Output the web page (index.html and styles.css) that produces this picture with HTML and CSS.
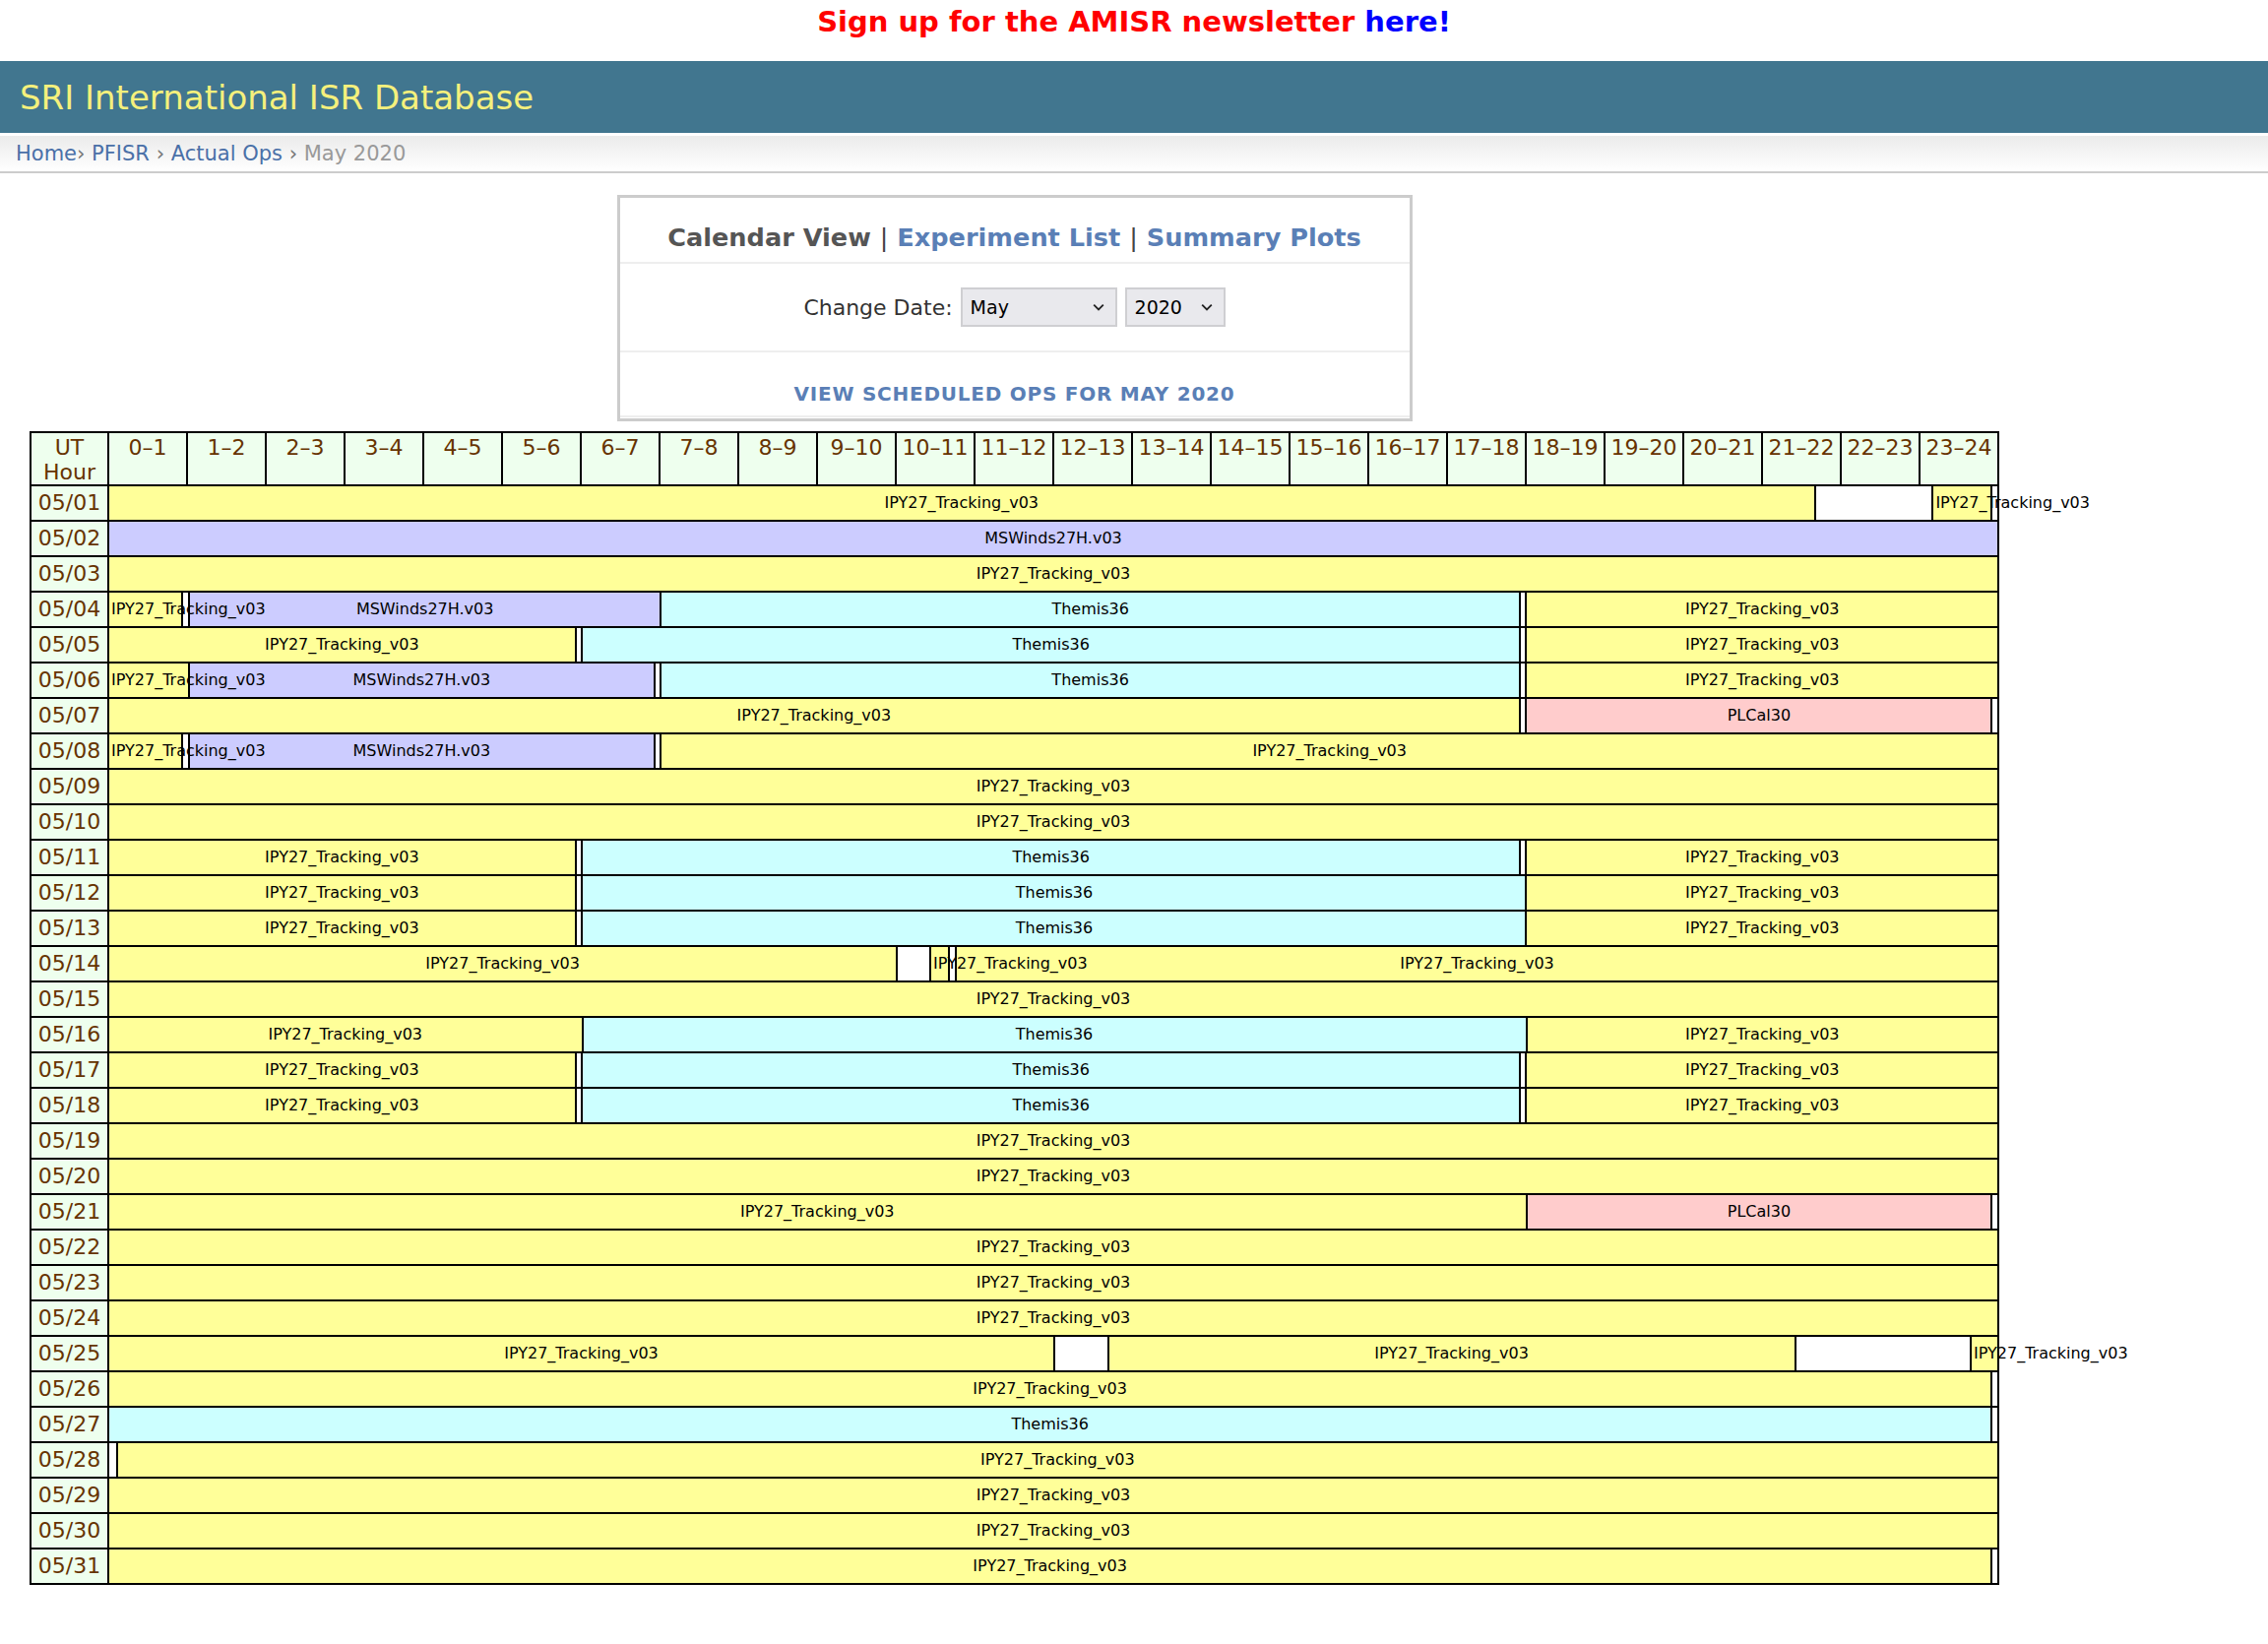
FILE: index.html
```html
<!DOCTYPE html>
<html lang="en">
<head>
<meta charset="utf-8">
<title>SRI International ISR Database - PFISR Actual Ops May 2020</title>
<link rel="stylesheet" href="styles.css">
</head>
<body>
<div class="promo">Sign up for the AMISR newsletter <a href="#">here!</a></div>
<header class="topbar"><h1>SRI International ISR Database</h1></header>
<nav class="crumbs"><a href="#">Home</a>› <a href="#">PFISR</a> › <a href="#">Actual Ops</a> › <span class="here">May 2020</span></nav>

<main class="content">
  <section class="panel">
    <div class="panel-tabs"><span class="current">Calendar View</span> <span class="sep">|</span> <a href="#">Experiment List</a> <span class="sep">|</span> <a href="#">Summary Plots</a></div>
    <div class="panel-date">
      <span class="label">Change Date:</span>
      <span class="select month"><span class="val">May</span><svg class="chev" viewBox="0 0 10 6"><path d="M1 1l4 4 4-4" fill="none" stroke="#222" stroke-width="1.5"/></svg></span>
      <span class="select year"><span class="val">2020</span><svg class="chev" viewBox="0 0 10 6"><path d="M1 1l4 4 4-4" fill="none" stroke="#222" stroke-width="1.5"/></svg></span>
    </div>
    <div class="panel-link"><a href="#">VIEW SCHEDULED OPS FOR MAY 2020</a></div>
  </section>

  <table class="cal">
    <colgroup><col class="c-date"><col class="c-hr"><col class="c-hr"><col class="c-hr"><col class="c-hr"><col class="c-hr"><col class="c-hr"><col class="c-hr"><col class="c-hr"><col class="c-hr"><col class="c-hr"><col class="c-hr"><col class="c-hr"><col class="c-hr"><col class="c-hr"><col class="c-hr"><col class="c-hr"><col class="c-hr"><col class="c-hr"><col class="c-hr"><col class="c-hr"><col class="c-hr"><col class="c-hr"><col class="c-hr"><col class="c-hr"></colgroup>
    <thead>
      <tr><th>UT<br>Hour</th><th>0–1</th><th>1–2</th><th>2–3</th><th>3–4</th><th>4–5</th><th>5–6</th><th>6–7</th><th>7–8</th><th>8–9</th><th>9–10</th><th>10–11</th><th>11–12</th><th>12–13</th><th>13–14</th><th>14–15</th><th>15–16</th><th>16–17</th><th>17–18</th><th>18–19</th><th>19–20</th><th>20–21</th><th>21–22</th><th>22–23</th><th>23–24</th></tr>
    </thead>
    <tbody>
      <tr><td class="date">05/01</td><td class="ops" colspan="24"><div class="track"><div class="seg ipy" style="width:90.2778%"><span>IPY27_Tracking_v03</span></div><div class="seg gap" style="width:6.25%"></div><div class="seg ipy" style="width:3.125%"><span>IPY27_Tracking_v03</span></div><div class="seg gap" style="width:0.3472%"></div></div></td></tr>
      <tr><td class="date">05/02</td><td class="ops" colspan="24"><div class="track"><div class="seg msw" style="width:100%"><span>MSWinds27H.v03</span></div></div></td></tr>
      <tr><td class="date">05/03</td><td class="ops" colspan="24"><div class="track"><div class="seg ipy" style="width:100%"><span>IPY27_Tracking_v03</span></div></div></td></tr>
      <tr><td class="date">05/04</td><td class="ops" colspan="24"><div class="track"><div class="seg ipy" style="width:3.8194%"><span>IPY27_Tracking_v03</span></div><div class="seg gap" style="width:0.3472%"></div><div class="seg msw" style="width:25%"><span>MSWinds27H.v03</span></div><div class="seg thm" style="width:45.4861%"><span>Themis36</span></div><div class="seg gap" style="width:0.3472%"></div><div class="seg ipy" style="width:25%"><span>IPY27_Tracking_v03</span></div></div></td></tr>
      <tr><td class="date">05/05</td><td class="ops" colspan="24"><div class="track"><div class="seg ipy" style="width:24.6528%"><span>IPY27_Tracking_v03</span></div><div class="seg gap" style="width:0.3472%"></div><div class="seg thm" style="width:49.6528%"><span>Themis36</span></div><div class="seg gap" style="width:0.3472%"></div><div class="seg ipy" style="width:25%"><span>IPY27_Tracking_v03</span></div></div></td></tr>
      <tr><td class="date">05/06</td><td class="ops" colspan="24"><div class="track"><div class="seg ipy" style="width:4.1667%"><span>IPY27_Tracking_v03</span></div><div class="seg msw" style="width:24.6528%"><span>MSWinds27H.v03</span></div><div class="seg gap" style="width:0.3472%"></div><div class="seg thm" style="width:45.4861%"><span>Themis36</span></div><div class="seg gap" style="width:0.3472%"></div><div class="seg ipy" style="width:25%"><span>IPY27_Tracking_v03</span></div></div></td></tr>
      <tr><td class="date">05/07</td><td class="ops" colspan="24"><div class="track"><div class="seg ipy" style="width:74.6528%"><span>IPY27_Tracking_v03</span></div><div class="seg gap" style="width:0.3472%"></div><div class="seg plc" style="width:24.6528%"><span>PLCal30</span></div><div class="seg gap" style="width:0.3472%"></div></div></td></tr>
      <tr><td class="date">05/08</td><td class="ops" colspan="24"><div class="track"><div class="seg ipy" style="width:3.8194%"><span>IPY27_Tracking_v03</span></div><div class="seg gap" style="width:0.3472%"></div><div class="seg msw" style="width:24.6528%"><span>MSWinds27H.v03</span></div><div class="seg gap" style="width:0.3472%"></div><div class="seg ipy" style="width:70.8333%"><span>IPY27_Tracking_v03</span></div></div></td></tr>
      <tr><td class="date">05/09</td><td class="ops" colspan="24"><div class="track"><div class="seg ipy" style="width:100%"><span>IPY27_Tracking_v03</span></div></div></td></tr>
      <tr><td class="date">05/10</td><td class="ops" colspan="24"><div class="track"><div class="seg ipy" style="width:100%"><span>IPY27_Tracking_v03</span></div></div></td></tr>
      <tr><td class="date">05/11</td><td class="ops" colspan="24"><div class="track"><div class="seg ipy" style="width:24.6528%"><span>IPY27_Tracking_v03</span></div><div class="seg gap" style="width:0.3472%"></div><div class="seg thm" style="width:49.6528%"><span>Themis36</span></div><div class="seg gap" style="width:0.3472%"></div><div class="seg ipy" style="width:25%"><span>IPY27_Tracking_v03</span></div></div></td></tr>
      <tr><td class="date">05/12</td><td class="ops" colspan="24"><div class="track"><div class="seg ipy" style="width:24.6528%"><span>IPY27_Tracking_v03</span></div><div class="seg gap" style="width:0.3472%"></div><div class="seg thm" style="width:50%"><span>Themis36</span></div><div class="seg ipy" style="width:25%"><span>IPY27_Tracking_v03</span></div></div></td></tr>
      <tr><td class="date">05/13</td><td class="ops" colspan="24"><div class="track"><div class="seg ipy" style="width:24.6528%"><span>IPY27_Tracking_v03</span></div><div class="seg gap" style="width:0.3472%"></div><div class="seg thm" style="width:50%"><span>Themis36</span></div><div class="seg ipy" style="width:25%"><span>IPY27_Tracking_v03</span></div></div></td></tr>
      <tr><td class="date">05/14</td><td class="ops" colspan="24"><div class="track"><div class="seg ipy" style="width:41.6667%"><span>IPY27_Tracking_v03</span></div><div class="seg gap" style="width:1.7708%"></div><div class="seg ipy" style="width:1.0069%"><span>IPY27_Tracking_v03</span></div><div class="seg gap" style="width:0.3472%"></div><div class="seg ipy" style="width:55.2083%"><span>IPY27_Tracking_v03</span></div></div></td></tr>
      <tr><td class="date">05/15</td><td class="ops" colspan="24"><div class="track"><div class="seg ipy" style="width:100%"><span>IPY27_Tracking_v03</span></div></div></td></tr>
      <tr><td class="date">05/16</td><td class="ops" colspan="24"><div class="track"><div class="seg ipy" style="width:25%"><span>IPY27_Tracking_v03</span></div><div class="seg thm" style="width:50%"><span>Themis36</span></div><div class="seg ipy" style="width:25%"><span>IPY27_Tracking_v03</span></div></div></td></tr>
      <tr><td class="date">05/17</td><td class="ops" colspan="24"><div class="track"><div class="seg ipy" style="width:24.6528%"><span>IPY27_Tracking_v03</span></div><div class="seg gap" style="width:0.3472%"></div><div class="seg thm" style="width:49.6528%"><span>Themis36</span></div><div class="seg gap" style="width:0.3472%"></div><div class="seg ipy" style="width:25%"><span>IPY27_Tracking_v03</span></div></div></td></tr>
      <tr><td class="date">05/18</td><td class="ops" colspan="24"><div class="track"><div class="seg ipy" style="width:24.6528%"><span>IPY27_Tracking_v03</span></div><div class="seg gap" style="width:0.3472%"></div><div class="seg thm" style="width:49.6528%"><span>Themis36</span></div><div class="seg gap" style="width:0.3472%"></div><div class="seg ipy" style="width:25%"><span>IPY27_Tracking_v03</span></div></div></td></tr>
      <tr><td class="date">05/19</td><td class="ops" colspan="24"><div class="track"><div class="seg ipy" style="width:100%"><span>IPY27_Tracking_v03</span></div></div></td></tr>
      <tr><td class="date">05/20</td><td class="ops" colspan="24"><div class="track"><div class="seg ipy" style="width:100%"><span>IPY27_Tracking_v03</span></div></div></td></tr>
      <tr><td class="date">05/21</td><td class="ops" colspan="24"><div class="track"><div class="seg ipy" style="width:75%"><span>IPY27_Tracking_v03</span></div><div class="seg plc" style="width:24.6528%"><span>PLCal30</span></div><div class="seg gap" style="width:0.3472%"></div></div></td></tr>
      <tr><td class="date">05/22</td><td class="ops" colspan="24"><div class="track"><div class="seg ipy" style="width:100%"><span>IPY27_Tracking_v03</span></div></div></td></tr>
      <tr><td class="date">05/23</td><td class="ops" colspan="24"><div class="track"><div class="seg ipy" style="width:100%"><span>IPY27_Tracking_v03</span></div></div></td></tr>
      <tr><td class="date">05/24</td><td class="ops" colspan="24"><div class="track"><div class="seg ipy" style="width:100%"><span>IPY27_Tracking_v03</span></div></div></td></tr>
      <tr><td class="date">05/25</td><td class="ops" colspan="24"><div class="track"><div class="seg ipy" style="width:50%"><span>IPY27_Tracking_v03</span></div><div class="seg gap" style="width:2.8472%"></div><div class="seg ipy" style="width:36.3889%"><span>IPY27_Tracking_v03</span></div><div class="seg gap" style="width:9.3056%"></div><div class="seg ipy" style="width:1.4583%"><span>IPY27_Tracking_v03</span></div></div></td></tr>
      <tr><td class="date">05/26</td><td class="ops" colspan="24"><div class="track"><div class="seg ipy" style="width:99.6528%"><span>IPY27_Tracking_v03</span></div><div class="seg gap" style="width:0.3472%"></div></div></td></tr>
      <tr><td class="date">05/27</td><td class="ops" colspan="24"><div class="track"><div class="seg thm" style="width:99.6528%"><span>Themis36</span></div><div class="seg gap" style="width:0.3472%"></div></div></td></tr>
      <tr><td class="date">05/28</td><td class="ops" colspan="24"><div class="track"><div class="seg gap" style="width:0.3472%"></div><div class="seg ipy" style="width:99.6528%"><span>IPY27_Tracking_v03</span></div></div></td></tr>
      <tr><td class="date">05/29</td><td class="ops" colspan="24"><div class="track"><div class="seg ipy" style="width:100%"><span>IPY27_Tracking_v03</span></div></div></td></tr>
      <tr><td class="date">05/30</td><td class="ops" colspan="24"><div class="track"><div class="seg ipy" style="width:100%"><span>IPY27_Tracking_v03</span></div></div></td></tr>
      <tr><td class="date">05/31</td><td class="ops" colspan="24"><div class="track"><div class="seg ipy" style="width:99.6528%"><span>IPY27_Tracking_v03</span></div><div class="seg gap" style="width:0.3472%"></div></div></td></tr>
    </tbody>
  </table>
</main>
</body>
</html>
```
FILE: styles.css
```css
* { box-sizing: border-box; }
html, body { margin: 0; padding: 0; background: #fff; }
body { font-family: "DejaVu Sans", Verdana, sans-serif; color: #000; }
a { text-decoration: none; }

.promo {
  height: 62px;
  padding-top: 4px;
  line-height: 36px;
  text-align: center;
  font-size: 29px;
  font-weight: bold;
  color: #ff0000;
}
.promo a { color: #0000ff; }

.topbar {
  height: 73px;
  background: #41768f;
  padding-left: 20px;
  display: flex;
  align-items: center;
}
.topbar h1 {
  margin: 0;
  font-size: 34px;
  font-weight: normal;
  color: #f5f07c;
}

.crumbs {
  margin-top: 3px;
  height: 38px;
  padding-left: 16px;
  background: linear-gradient(#ebebeb, #ffffff);
  border-bottom: 2px solid #cccccc;
  font-size: 21px;
  line-height: 36px;
  color: #777;
}
.crumbs a { color: #4a70a8; }
.crumbs .here { color: #999; }

.content {
  width: 2001px;
  margin: 22px 0 40px 30px;
  display: flex;
  flex-direction: column;
  align-items: center;
  gap: 10px;
}

.panel {
  width: 808px;
  border: 3px solid #cccccc;
  padding-bottom: 1px;
  text-align: center;
}
.panel-tabs {
  height: 67px;
  padding-top: 25px;
  line-height: 30px;
  font-size: 25.6px;
  font-weight: bold;
  border-bottom: 2px solid #eeeeee;
  color: #555;
}
.panel-tabs .current { color: #555; }
.panel-tabs .sep { font-weight: normal; color: #444; }
.panel-tabs a { color: #5a7fb6; }

.panel-date {
  height: 90px;
  display: flex;
  align-items: center;
  justify-content: center;
  gap: 8px;
  border-bottom: 2px solid #eeeeee;
  font-size: 22px;
  color: #333;
}
.select {
  height: 40px;
  display: flex;
  align-items: center;
  justify-content: space-between;
  padding: 0 11px 0 8px;
  background: #e9e9ed;
  border: 2px solid #cfcfd2;
  font-size: 19px;
  color: #000;
}
.select.month { width: 159px; }
.select.year { width: 102px; }
.select .chev { width: 12px; height: 8px; }

.panel-link {
  height: 66px;
  padding-top: 30px;
  line-height: 24px;
  border-bottom: 2px solid #eeeeee;
  font-size: 20px;
  font-weight: bold;
  letter-spacing: 0.75px;
}
.panel-link a { color: #5a7fb6; }

.cal {
  width: 2001px;
  border-collapse: collapse;
  table-layout: fixed;
  border: 2px solid #000;
}
.cal col.c-date { width: 79px; }
.cal col.c-hr { width: 80px; }
.cal th, .cal td {
  border: 2px solid #000;
  padding: 0;
}
.cal th {
  background: #eeffee;
  color: #663300;
  font-weight: normal;
  font-size: 22px;
  line-height: 25px;
  padding-top: 2px;
  vertical-align: top;
  text-align: center;
  white-space: nowrap;
}
.cal td.date {
  background: #eeffee;
  color: #663300;
  font-size: 22px;
  line-height: 34px;
  text-align: center;
}
.track {
  display: flex;
  height: 34px;
}
.seg {
  flex: none;
  min-width: 0;
  height: 100%;
  border-left: 2px solid #000;
  padding: 0 2px;
  text-align: center;
  white-space: nowrap;
  font-size: 16px;
  line-height: 34px;
}
.seg:first-child { border-left: 0; }
.seg span { position: relative; }
.ipy { background: #ffff99; }
.msw { background: #ccccff; }
.thm { background: #ccffff; }
.plc { background: #ffcccc; }
.gap { background: #ffffff; }
```
